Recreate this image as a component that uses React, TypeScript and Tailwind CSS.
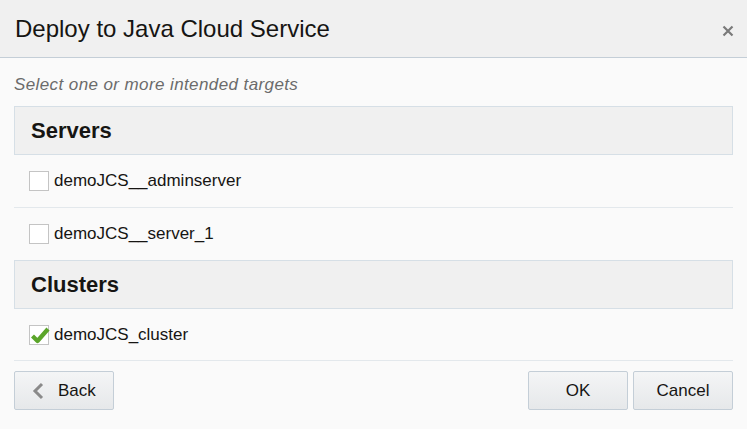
export default function App() {
  return (
    <div className="w-[747px] h-[429px] bg-[#fafafa] text-[#161513] font-['Liberation_Sans',Arial,sans-serif] overflow-hidden">
      {/* Header */}
      <div className="h-[58px] bg-[#f0f0f0] border-b border-[#c4ced7] flex items-center justify-between pl-[15px] pr-[13px]">
        <h1 className="text-[24px] leading-none">Deploy to Java Cloud Service</h1>
        <svg width="12" height="12" viewBox="0 0 12 12" className="mt-[4px]">
          <path d="M1.5 1.5 L10.5 10.5 M10.5 1.5 L1.5 10.5" stroke="#7a7a7a" strokeWidth="2.2" />
        </svg>
      </div>

      {/* Body */}
      <div className="px-[14px] pt-[15px]">
        <p className="italic text-[17px] tracking-[0.4px] leading-[24px] text-[#6b6b6b] mb-[9px]">Select one or more intended targets</p>

        <SectionHeader title="Servers" />
        <Row label="demoJCS__adminserver" className="h-[53px] border-b" />
        <Row label="demoJCS__server_1" className="h-[52px]" />
        <SectionHeader title="Clusters" />
        <Row label="demoJCS_cluster" checked className="h-[52px] border-b" />

        {/* Footer */}
        <div className="flex items-center mt-[10px]">
          <Button className="w-[100px] gap-[14px] justify-start pl-[17px]">
            <svg width="12" height="18" viewBox="0 0 12 18">
              <path d="M10 2 L3 9 L10 16" fill="none" stroke="#8a8a8a" strokeWidth="3" />
            </svg>
            <span>Back</span>
          </Button>
          <div className="ml-auto flex gap-[5px]">
            <Button className="w-[100px] justify-center">OK</Button>
            <Button className="w-[100px] justify-center">Cancel</Button>
          </div>
        </div>
      </div>
    </div>
  )
}

function SectionHeader({ title }: { title: string }) {
  return (
    <div className="h-[49px] bg-[#f0f0f0] border border-[#d6dfe6] flex items-center pl-[16px]">
      <span className="text-[22px] font-bold leading-none">{title}</span>
    </div>
  )
}

function Row({ label, checked = false, className = '' }: { label: string; checked?: boolean; className?: string }) {
  return (
    <div className={`flex items-center pl-[15px] gap-[5px] border-[#e3e8ec] ${className}`}>
      <span className="w-[20px] h-[20px] bg-white border border-[#c4c4c4] relative shrink-0">
        {checked && (
          <svg width="20" height="20" viewBox="0 0 20 20" className="absolute left-[0px] top-[-1px]">
            <path d="M2.5 11 L7.5 16 L18 4" fill="none" stroke="#5ba52a" strokeWidth="4.2" strokeLinejoin="round" />
          </svg>
        )}
      </span>
      <span className="text-[17px]">{label}</span>
    </div>
  )
}

function Button({ children, className = '' }: { children: React.ReactNode; className?: string }) {
  return (
    <button className={`h-[39px] flex items-center rounded-[2px] border border-[#c4ced7] bg-gradient-to-b from-[#f4f5f6] to-[#e6e8ea] text-[17px] text-[#161513] ${className}`}>
      {children}
    </button>
  )
}
